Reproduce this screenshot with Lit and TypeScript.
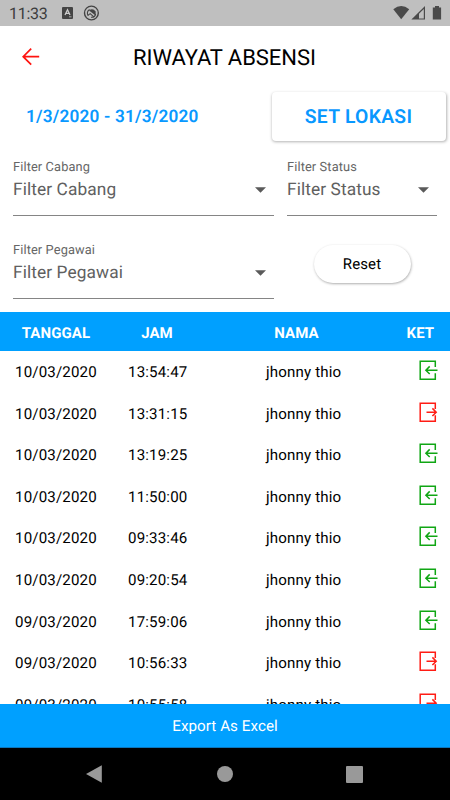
import { LitElement, html, css, svg } from "lit";
import { customElement, property } from "lit/decorators.js";

type Kind = "in" | "out";
interface Row { date: string; time: string; name: string; kind: Kind; }

const ROWS: Row[] = [
  { date: "10/03/2020", time: "13:54:47", name: "jhonny thio", kind: "in" },
  { date: "10/03/2020", time: "13:31:15", name: "jhonny thio", kind: "out" },
  { date: "10/03/2020", time: "13:19:25", name: "jhonny thio", kind: "in" },
  { date: "10/03/2020", time: "11:50:00", name: "jhonny thio", kind: "in" },
  { date: "10/03/2020", time: "09:33:46", name: "jhonny thio", kind: "in" },
  { date: "10/03/2020", time: "09:20:54", name: "jhonny thio", kind: "in" },
  { date: "09/03/2020", time: "17:59:06", name: "jhonny thio", kind: "in" },
  { date: "09/03/2020", time: "10:56:33", name: "jhonny thio", kind: "out" },
  { date: "09/03/2020", time: "10:55:58", name: "jhonny thio", kind: "out" },
];

@customElement("filter-select")
class FilterSelect extends LitElement {
  @property() label = "";

  static styles = css`
    :host { display: block; height: 57px; border-bottom: 1px solid #858585; box-sizing: border-box; }
    .label { font-size: 12.8px; line-height: 17px; height: 16px; letter-spacing: 0.12px; color: #666; }
    .value { display: flex; align-items: center; justify-content: space-between; height: 30px; padding-right: 8px; font-size: 17.3px; letter-spacing: 0.1px; color: #606060; }
    .text { padding-bottom: 1px; }
    svg { display: block; }
  `;

  render() {
    return html`
      <div class="label">${this.label}</div>
      <div class="value">
        <span class="text">${this.label}</span>
        <svg width="11" height="6" viewBox="0 0 11 6"><path d="M0 0.2H11L5.5 5.8Z" fill="#5a5a5a" /></svg>
      </div>
    `;
  }
}

@customElement("app-root")
class AppRoot extends LitElement {
  static styles = css`
    :host { display: flex; flex-direction: column; width: 450px; height: 800px; overflow: hidden; background: #fff; color: #000; font-family: Roboto, "Liberation Sans", sans-serif; text-rendering: geometricPrecision; }
    * { box-sizing: border-box; }
    svg { display: block; flex: none; }
    .status { display: flex; align-items: center; flex: none; height: 26px; background: #bfbfbf; padding: 0 8px 0 9px; color: #3c3c3c; }
    .clock { width: 53px; font-size: 16px; line-height: 26px; padding-top: 1px; letter-spacing: -0.25px; }
    .spacer { flex: 1; }
    .title-bar { display: grid; grid-template-columns: 133px 1fr; align-items: center; flex: none; height: 62px; }
    .back { margin-left: 22px; }
    .title { font-size: 22px; line-height: 30px; letter-spacing: -0.05px; white-space: nowrap; padding-top: 3px; }
    .range { display: flex; flex: none; height: 66px; padding: 4px 4px 0 26px; justify-content: space-between; }
    .dates { font-size: 17.2px; font-weight: 600; line-height: 51px; color: #0898ff; letter-spacing: 0.2px; }
    .location { width: 174px; height: 49px; border-radius: 4px; background: #fff; box-shadow: 0.5px 1px 3px rgba(0, 0, 0, 0.3); color: #0898ff; font-size: 19.3px; font-weight: 600; letter-spacing: 0.3px; line-height: 50px; padding-right: 1px; text-align: center; }
    .filters { display: grid; grid-template-columns: 261px 150px; column-gap: 13px; grid-template-rows: 57px 57px; row-gap: 26px; flex: none; height: 158px; padding: 5px 13px 0; }
    .reset { justify-self: center; margin-top: 3px; width: 97px; height: 38px; border-radius: 19px; background: #fff; box-shadow: 0.5px 1px 2.5px rgba(0, 0, 0, 0.32); font-size: 15px; letter-spacing: 0.1px; line-height: 39px; text-align: center; }
    .head, .row { display: grid; align-items: center; }
    .head { grid-template-columns: 112px 90px 189px 59px; flex: none; height: 39px; background: #00a0ff; color: #fff; font-weight: 700; font-size: 15px; letter-spacing: 0.1px; justify-items: center; line-height: 38px; padding-top: 2px; }
    .ket { justify-self: start; padding-left: 15.5px; }
    .list { flex: 1; min-height: 0; overflow: hidden; }
    .row { grid-template-columns: 113px 138px 153px 20px; height: 41.55px; font-size: 15.1px; letter-spacing: 0.15px; padding-left: 15px; }
    .cell { padding-top: 1px; }
    .row svg { margin-top: -2px; }
    .in { color: #10a614; }
    .out { color: #ff1c14; }
    .export { flex: none; height: 44px; background: #00a0ff; border-bottom: 1px solid #0b76bc; color: #fff; font-size: 15.2px; letter-spacing: 0.05px; line-height: 45px; text-align: center; }
    .nav { display: grid; grid-template-columns: 29px 130px 131px 129px; flex: none; height: 52px; align-items: center; background: #000; color: #999; }
    .nav svg { justify-self: center; }
    .nav .back-key { grid-column: 2; justify-self: start; }
  `;

  private entryIcon(kind: Kind) {
    const arrow = kind === "in"
      ? svg`<path d="M18.5 10.2H7M10.7 6.4L6.9 10.2L10.7 14" />`
      : svg`<path d="M7.5 10.2H17.2M13.4 6.4L17.2 10.2L13.4 14" />`;
    return html`<svg class=${kind} width="20" height="21" viewBox="0 0 20 21" fill="none" stroke="currentColor" stroke-width="1.5">
      <path d="M16.3 7V1.2H1.2V19.2H16.3V13.3" />${arrow}
    </svg>`;
  }

  render() {
    return html`
      <div class="status">
        <span class="clock">11:33</span>
        <svg width="11" height="12" viewBox="0 0 11 12"><rect width="11" height="12" rx="1" fill="#444" /><path d="M3 8L5.5 2.8L8 8M4 6.3H7" stroke="#ccc" stroke-width="1.3" fill="none" /><path d="M7 9.8H9.5" stroke="#aaa" /></svg>
        <svg width="28" height="16" viewBox="0 0 28 16" fill="none" stroke="#444"><circle cx="18.4" cy="8" r="6.9" stroke-width="1.4" /><path d="M15.2 10.6A4.2 4.2 0 0 1 16.6 4.4M22.6 8.8A4.2 4.2 0 0 1 18 12.2" stroke-width="1.1" /><path d="M16 5.4Q20 2.6 22.6 6.6L22.6 10.4Z" fill="#444" stroke="none" /><path d="M14.9 10.4L17.2 8.6L20.8 11.8" stroke-width="1.1" /></svg>
        <span class="spacer"></span>
        <svg width="49" height="16" viewBox="0 0 49 16"><path d="M0.3 4.2Q8.2 -2.4 16.2 4.2L8.2 14.2Z" fill="#4a4a4a" /><path d="M18.4 14.6L32 1V14.6Z" fill="#4a4a4a" /><path d="M26 8.8L30.8 4V13.4H26Z" fill="#bfbfbf" /><path d="M39.8 2.4H42V1H46V2.4H48.1V14.6H39.8Z" fill="#4a4a4a" /></svg>
      </div>
      <div class="title-bar">
        <svg class="back" width="18" height="18" viewBox="0 0 18 18" fill="none" stroke="#ff1410" stroke-width="1.7"><path d="M17.2 8.7H1.4M9.2 0.7L1.2 8.7L9.2 16.7" /></svg>
        <div class="title">RIWAYAT ABSENSI</div>
      </div>
      <div class="range">
        <div class="dates">1/3/2020 - 31/3/2020</div>
        <div class="location">SET LOKASI</div>
      </div>
      <div class="filters">
        <filter-select label="Filter Cabang"></filter-select>
        <filter-select label="Filter Status"></filter-select>
        <filter-select label="Filter Pegawai"></filter-select>
        <div class="reset">Reset</div>
      </div>
      <div class="head">
        <span>TANGGAL</span><span>JAM</span><span>NAMA</span><span class="ket">KET</span>
      </div>
      <div class="list">
        ${ROWS.map((r) => html`<div class="row">
          <span class="cell">${r.date}</span><span class="cell">${r.time}</span><span class="cell">${r.name}</span>${this.entryIcon(r.kind)}
        </div>`)}
      </div>
      <div class="export">Export As Excel</div>
      <div class="nav">
        <svg class="back-key" width="130" height="18" viewBox="0 0 130 18"><path d="M57 9L72.8 0.2V17.8Z" fill="currentColor" /></svg>
        <svg width="16" height="16" viewBox="0 0 16 16"><circle cx="8" cy="8" r="8" fill="currentColor" /></svg>
        <svg width="17" height="17" viewBox="0 0 17 17"><rect width="17" height="17" rx="1" fill="currentColor" /></svg>
      </div>
    `;
  }
}
